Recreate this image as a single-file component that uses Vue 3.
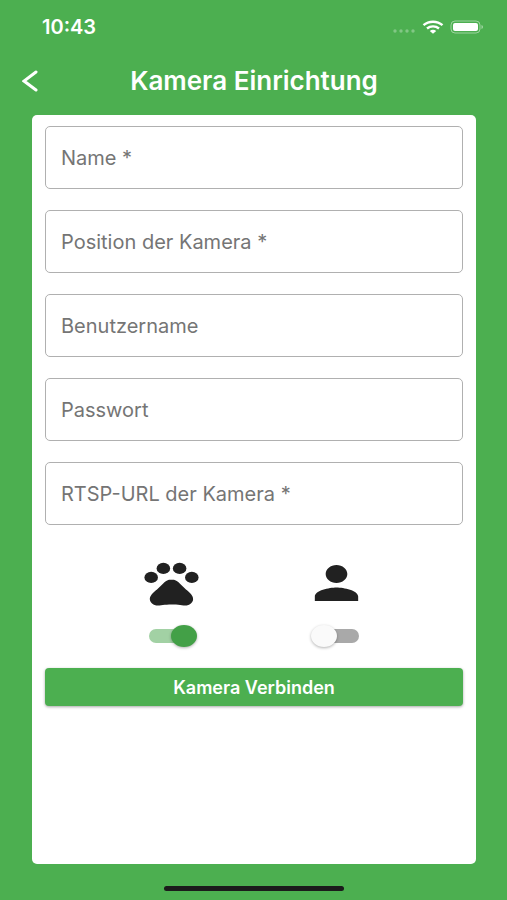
<template>
  <div class="page">
    <div class="status-bar">
      <span class="time">10:43</span>
      <div class="status-icons">
        <svg class="signal" viewBox="0 0 24 6" aria-hidden="true">
          <circle cx="3" cy="3" r="1.7" />
          <circle cx="9" cy="3" r="1.7" />
          <circle cx="15" cy="3" r="1.7" />
          <circle cx="21" cy="3" r="1.7" />
        </svg>
        <svg class="wifi" viewBox="0 0 22 14" aria-hidden="true">
          <path d="M1.5 5.2C6.8.5 15.2.5 20.500 5.2" />
          <path d="M5 8.5c3.400-2.900 8.600-2.900 12 0" />
          <path class="wifi-dot" d="M7.800 11c1.800-1.700 4.600-1.700 6.400 0L11 13.800z" />
        </svg>
        <svg class="battery" viewBox="0 0 34 14" aria-hidden="true">
          <rect class="battery-case" x="1" y="1" width="29" height="12" rx="4" />
          <rect x="3" y="3" width="25" height="8" rx="2" />
          <path class="battery-tip" d="M31.5 5c2 .8 2 3.200 0 4z" />
        </svg>
      </div>
    </div>

    <header class="header">
      <button type="button" class="back" aria-label="Zurück">
        <svg viewBox="0 0 16 22" aria-hidden="true">
          <path d="M14 2 2 11l12 9" />
        </svg>
      </button>
      <h1>Kamera Einrichtung</h1>
    </header>

    <form class="card" @submit.prevent>
      <div v-for="field in fields" :key="field.id" class="field">
        <input
          :id="field.id"
          v-model="form[field.id]"
          :type="field.type"
          :required="field.required"
          placeholder=" "
        />
        <label :for="field.id">{{ field.label }}{{ field.required ? ' *' : '' }}</label>
      </div>

      <div class="detections">
        <div class="detection">
          <label for="tiere" aria-label="Tiere erkennen">
            <svg viewBox="0 0 24 24" preserveAspectRatio="none" aria-hidden="true">
              <circle cx="4.5" cy="9.5" r="2.5" />
              <circle cx="9" cy="5.5" r="2.5" />
              <circle cx="15" cy="5.5" r="2.5" />
              <circle cx="19.5" cy="9.5" r="2.5" />
              <path d="M17.34 14.86c-.87-1.02-1.6-1.89-2.48-2.91-.46-.54-1.05-1.08-1.75-1.32-.11-.04-.22-.07-.33-.09-.25-.04-.52-.04-.78-.04s-.53 0-.79.05c-.11.02-.22.05-.33.09-.7.24-1.28.78-1.75 1.32-.87 1.02-1.6 1.89-2.48 2.91-1.31 1.31-2.92 2.76-2.62 4.79.29 1.02 1.02 2.03 2.33 2.32.73.15 3.06-.44 5.54-.44h.18c2.48 0 4.81.58 5.54.44 1.31-.29 2.04-1.31 2.33-2.32.31-2.04-1.3-3.49-2.61-4.8z" />
            </svg>
          </label>
          <input id="tiere" v-model="tiere" type="checkbox" class="switch" />
        </div>
        <div class="detection">
          <label for="personen" aria-label="Personen erkennen">
            <svg viewBox="0 0 24 24" preserveAspectRatio="none" aria-hidden="true">
              <path d="M12 12c2.21 0 4-1.79 4-4s-1.79-4-4-4-4 1.79-4 4 1.79 4 4 4zm0 2c-2.67 0-8 1.34-8 4v2h16v-2c0-2.66-5.33-4-8-4z" />
            </svg>
          </label>
          <input id="personen" v-model="personen" type="checkbox" class="switch" />
        </div>
      </div>

      <button type="submit" class="connect">Kamera Verbinden</button>
    </form>

    <div class="home-indicator"></div>
  </div>
</template>

<script setup>
import { reactive, ref } from 'vue';

const fields = [
  { id: 'name', label: 'Name', type: 'text', required: true },
  { id: 'position', label: 'Position der Kamera', type: 'text', required: true },
  { id: 'benutzername', label: 'Benutzername', type: 'text', required: false },
  { id: 'passwort', label: 'Passwort', type: 'password', required: false },
  { id: 'rtsp', label: 'RTSP-URL der Kamera', type: 'text', required: true }
];

const form = reactive({
  name: '',
  position: '',
  benutzername: '',
  passwort: '',
  rtsp: ''
});

const tiere = ref(true);
const personen = ref(false);
</script>

<style>
body {
  margin: 0;
  background-color: #4caf50;
}
</style>

<style scoped>
.page {
  box-sizing: border-box;
  display: flex;
  flex-direction: column;
  min-height: 100vh;
  padding: 0 31px 9px 32px;
  background-color: #4caf50;
  font-family: Inter, "Liberation Sans", sans-serif;
}

.status-bar {
  display: flex;
  align-items: center;
  justify-content: space-between;
  height: 54px;
  margin: 0 -8px 0 10px;
  color: white;
}

.time {
  font-size: 20px;
  font-weight: 600;
}

.status-icons {
  display: flex;
  align-items: center;
  gap: 6px;
}

.status-icons svg {
  fill: white;
}

.status-icons .signal {
  width: 24px;
  height: 6px;
  margin-top: 8px;
  opacity: 0.3;
}

.wifi {
  width: 22px;
  height: 14px;
}

.status-icons .wifi path {
  fill: none;
  stroke: white;
  stroke-width: 2.4;
}

.status-icons .wifi .wifi-dot {
  fill: white;
  stroke: none;
}

.battery {
  width: 34px;
  height: 14px;
}

.status-icons .battery-case {
  fill: none;
  stroke: white;
  stroke-opacity: 0.45;
}

.battery-tip {
  opacity: 0.5;
}

/* Colonnes latérales égales pour garder le titre centré */
.header {
  display: grid;
  grid-template-columns: 40px 1fr 40px;
  align-items: center;
  height: 54px;
  margin: 0 -20px 7px;
}

.back {
  display: flex;
  padding: 8px 10px;
  border: none;
  background: none;
  cursor: pointer;
}

.back svg {
  width: 16px;
  height: 22px;
  fill: none;
  stroke: white;
  stroke-width: 3;
  stroke-linecap: round;
}

h1 {
  margin: 0;
  color: white;
  font-size: 26px;
  font-weight: 600;
  line-height: 32px;
  text-align: center;
  white-space: nowrap;
}

.card {
  display: flex;
  flex: 1;
  flex-direction: column;
  gap: 21px;
  padding: 11px 13px;
  border-radius: 5px;
  background-color: white;
}

.field {
  display: grid;
  align-items: center;
}

.field input,
.field label {
  grid-area: 1 / 1;
}

.field input {
  box-sizing: border-box;
  width: 100%;
  height: 63px;
  padding: 0 15px;
  border: 1px solid #b0b0b0;
  border-radius: 5px;
  background: none;
  color: #212121;
  font: inherit;
  font-size: 20px;
}

.field input:focus {
  border-color: #4caf50;
  outline: none;
}

.field label {
  justify-self: start;
  margin-left: 12px;
  padding: 0 4px;
  background-color: white;
  color: #757575;
  font-size: 20px;
  line-height: 24px;
  pointer-events: none;
}

.field input:focus + label,
.field input:not(:placeholder-shown) + label {
  transform: translateY(-31px);
  font-size: 14px;
}

.detections {
  display: flex;
  justify-content: space-evenly;
  padding-top: 10px;
}

.detection {
  display: flex;
  flex-direction: column;
  align-items: center;
  gap: 15px;
  width: 78px;
}

.detection label {
  display: flex;
}

.detection svg {
  width: 65px;
  height: 54px;
  fill: #212121;
}

.switch {
  display: flex;
  align-items: center;
  width: 44px;
  height: 14px;
  margin: 4px 0;
  border-radius: 8px;
  background-color: #a9a9a9;
  appearance: none;
  cursor: pointer;
}

/* Le bouton rond dépasse légèrement de la piste */
.switch::before {
  width: 26px;
  height: 22px;
  margin: 0 -4px;
  border-radius: 50%;
  background-color: #fafafa;
  box-shadow: 0 1px 3px rgba(0, 0, 0, 0.3);
  content: "";
}

.switch:checked {
  justify-content: flex-end;
  background-color: #a2d1a4;
}

.switch:checked::before {
  background-color: #43a047;
}

.connect {
  height: 38px;
  border: none;
  border-radius: 4px;
  background-color: #4caf50;
  box-shadow: 0 1px 3px rgba(0, 0, 0, 0.35);
  color: white;
  font-family: inherit;
  font-size: 18px;
  font-weight: 600;
  cursor: pointer;
}

.home-indicator {
  align-self: center;
  width: 180px;
  height: 5px;
  margin-top: 22px;
  border-radius: 3px;
  background-color: #1b1b1b;
}
</style>
